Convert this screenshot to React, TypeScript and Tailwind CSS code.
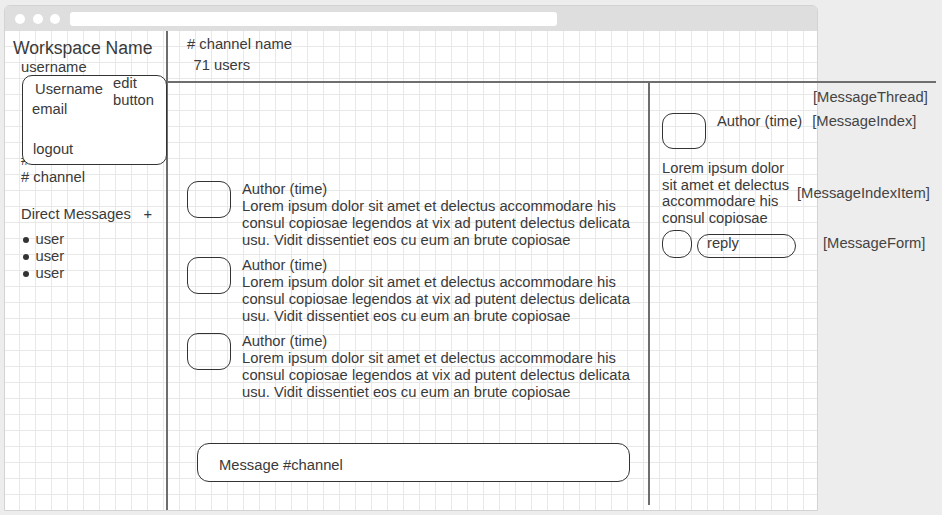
// Chat app wireframe: sidebar, channel messages and a thread panel on a grid canvas

const LOREM = [
  'Lorem ipsum dolor sit amet et delectus accommodare his',
  'consul copiosae legendos at vix ad putent delectus delicata',
  'usu. Vidit dissentiet eos cu eum an brute copiosae',
];

const THREAD_LOREM = ['Lorem ipsum dolor', 'sit amet et delectus', 'accommodare his', 'consul copiosae'];

const USERS = ['user', 'user', 'user'];

function Message() {
  return (
    <div className="flex items-start gap-[11px]">
      <div className="w-[44px] h-[37px] shrink-0 rounded-[11px] border border-[#333]" />
      <div className="leading-[17px] whitespace-nowrap">
        <div>Author (time)</div>
        {LOREM.map((line, i) => (
          <div key={i}>{line}</div>
        ))}
      </div>
    </div>
  );
}

function Sidebar() {
  return (
    <aside className="relative w-[163px] shrink-0 border-r-2 border-[#6e6e6e]">
      <div className="pt-[6px] pl-[8px] text-[17.6px] leading-[22px]">Workspace Name</div>
      <div className="ml-[16px] leading-[17px]">username</div>
      <div className="ml-[16px] mt-[76px] leading-[17px]"># channel</div>
      <div className="ml-[16px] leading-[17px]"># channel</div>
      <div className="ml-[16px] mt-[20px] pr-[14px] flex leading-[17px]">
        <span>Direct Messages</span>
        <span className="ml-auto text-[#3a3a3a]">+</span>
      </div>
      <ul className="mt-[8px] ml-[18px] leading-[17px]">
        {USERS.map((u, i) => (
          <li key={i} className="flex items-center gap-[6.5px]">
            <span className="w-[6px] h-[6px] rounded-full bg-[#333]" />
            <span>{u}</span>
          </li>
        ))}
      </ul>

      {/* user menu popover */}
      <div className="absolute left-[17px] top-[44px] w-[145px] h-[90px] rounded-[10px] border border-[#333] bg-white flex leading-[17px]">
        <div className="pl-[9px] pt-[5px] w-[82px]">
          <div className="ml-[3px]">Username</div>
          <div className="mt-[3px]">email</div>
          <div className="mt-[23px] ml-[1px]">logout</div>
        </div>
        <div className="mt-[-1px] pl-[8px]">
          <div>edit</div>
          <div>button</div>
        </div>
      </div>
    </aside>
  );
}

function Thread() {
  return (
    <div className="flex-1 pl-[12px] whitespace-nowrap leading-[17px]">
      <div className="ml-[151px] mt-[6px] text-[#444]">[MessageThread]</div>

      <div className="mt-[7px] flex items-start">
        <div className="w-[44px] h-[36px] shrink-0 rounded-[11px] border border-[#333]" />
        <div className="ml-[11px]">Author (time)</div>
        <div className="ml-[10px] text-[#444]">[MessageIndex]</div>
      </div>

      <div className="mt-[11px] flex items-center">
        <div className="w-[128px] leading-[16.7px]">
          {THREAD_LOREM.map((line, i) => (
            <div key={i}>{line}</div>
          ))}
        </div>
        <div className="ml-[7px] text-[#444]">[MessageIndexItem]</div>
      </div>

      <div className="mt-[3px] flex items-start">
        <div className="w-[30px] h-[28px] shrink-0 rounded-[12px] border border-[#333]" />
        <div className="ml-[5px] mt-[4px] w-[99px] h-[24px] rounded-full border border-[#333] pl-[9px]">reply</div>
        <div className="ml-[27px] mt-[5px] text-[#444]">[MessageForm]</div>
      </div>
    </div>
  );
}

export default function App() {
  return (
    <div className="w-[942px] h-[515px] overflow-hidden bg-[#ededed] pl-[4px] pt-[5px] font-['Liberation_Sans',Arial,sans-serif] text-[14.75px] text-[#3a3a3a]">
      <div className="w-[814px] h-[506px] rounded-t-[6px] border border-[#d3d3d3] flex flex-col">
        {/* title bar */}
        <div className="h-[25px] shrink-0 rounded-t-[5px] bg-[#dedede] flex items-center pl-[10px]">
          <div className="flex gap-[7.5px]">
            <span className="w-[10px] h-[10px] rounded-full bg-white" />
            <span className="w-[10px] h-[10px] rounded-full bg-white" />
            <span className="w-[10px] h-[10px] rounded-full bg-white" />
          </div>
          <div className="ml-[10px] w-[487px] h-[14px] rounded-[3px] bg-white" />
        </div>

        {/* canvas */}
        <div className="flex-1 flex bg-white bg-[linear-gradient(to_right,#e8e8e8_1px,transparent_1px),linear-gradient(to_bottom,#e8e8e8_1px,transparent_1px)] bg-[size:16px_16px] bg-[position:14px_15px]">
          <Sidebar />

          <main className="flex-1 flex flex-col">
            <header className="h-[52px] shrink-0 mr-[-6px] border-b-2 border-[#6e6e6e] leading-[17px]">
              <div className="pl-[19px] pt-[4.5px]"># channel name</div>
              <div className="pl-[25.5px] mt-[4px]">71 users</div>
            </header>

            <div className="flex-1 flex pb-[5px]">
              <section className="w-[482px] shrink-0 border-r-2 border-[#6e6e6e] pl-[19px] pt-[98px]">
                <div className="flex flex-col gap-[8px]">
                  <Message />
                  <Message />
                  <Message />
                </div>
                <div className="ml-[10px] mt-[42px] w-[433px] h-[39px] rounded-[12px] border border-[#333] bg-white pl-[21px] pt-[13px] leading-[17px]">
                  Message #channel
                </div>
              </section>

              <Thread />
            </div>
          </main>
        </div>
      </div>
    </div>
  );
}
